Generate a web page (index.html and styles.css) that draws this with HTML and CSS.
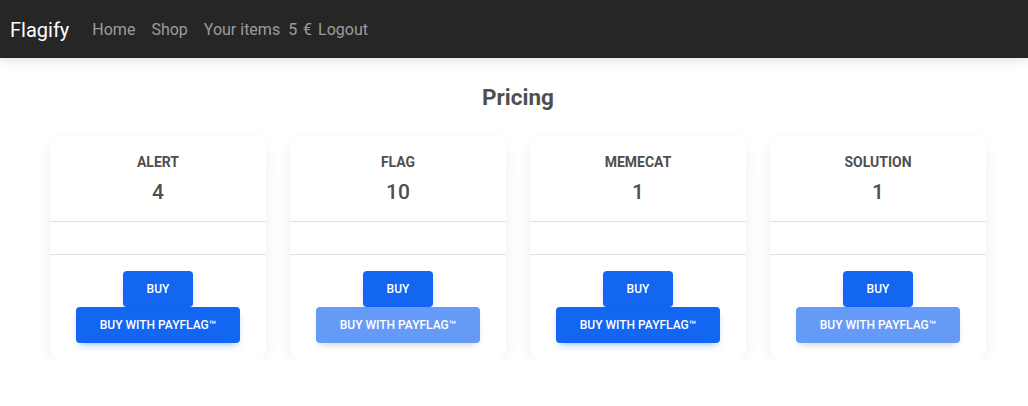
FILE: index.html
```html
<!DOCTYPE html>
<html>
<head>
<meta charset="utf-8">
<link rel="stylesheet" href="styles.css">
</head>
<body>
<nav class="navbar">
  <a class="brand">Flagify</a>
  <div class="nav-links">
    <a class="nav-link">Home</a>
    <a class="nav-link">Shop</a>
    <a class="nav-link items">Your items</a>
    <span class="balance">5 €</span>
    <a class="nav-link logout">Logout</a>
  </div>
</nav>
<main class="main">
  <h4 class="title">Pricing</h4>
  <div class="grid">
    <div class="card">
      <div class="card-header"><div class="name">ALERT</div><div class="price">4</div></div>
      <div class="card-body"></div>
      <div class="card-footer">
        <button class="btn">BUY</button>
        <button class="btn">BUY WITH PAYFLAG™</button>
      </div>
    </div>
    <div class="card">
      <div class="card-header"><div class="name">FLAG</div><div class="price">10</div></div>
      <div class="card-body"></div>
      <div class="card-footer">
        <button class="btn">BUY</button>
        <button class="btn disabled">BUY WITH PAYFLAG™</button>
      </div>
    </div>
    <div class="card">
      <div class="card-header"><div class="name">MEMECAT</div><div class="price">1</div></div>
      <div class="card-body"></div>
      <div class="card-footer">
        <button class="btn">BUY</button>
        <button class="btn">BUY WITH PAYFLAG™</button>
      </div>
    </div>
    <div class="card">
      <div class="card-header"><div class="name">SOLUTION</div><div class="price">1</div></div>
      <div class="card-body"></div>
      <div class="card-footer">
        <button class="btn">BUY</button>
        <button class="btn disabled">BUY WITH PAYFLAG™</button>
      </div>
    </div>
  </div>
</main>
</body>
</html>
```
FILE: styles.css
```css
* { box-sizing: border-box; }
html, body { margin: 0; background: #fff; }
body {
  font-family: Roboto, "Liberation Sans", sans-serif;
  color: #4f4f4f;
  font-size: 16px;
}
.navbar {
  height: 58px;
  background: #262626;
  display: flex;
  align-items: center;
  padding: 2px 10px 0;
  box-shadow: 0 4px 12px 0 rgba(0,0,0,.07), 0 2px 4px rgba(0,0,0,.05);
  position: relative;
}
.brand {
  color: #fff;
  font-size: 20px;
  line-height: 30px;
  margin-right: 15px;
}
.nav-links { display: flex; align-items: center; }
.nav-link, .balance {
  color: rgba(255,255,255,.55);
  font-size: 16px;
  line-height: 24px;
}
.nav-link { padding: 0 8px; }
.nav-link.items { padding-right: 8px; }
.balance { word-spacing: 2px; }
.nav-link.logout { padding-left: 6px; }
.main { padding: 24px 42px 0 50px; }
.title {
  margin: 0;
  text-align: center;
  font-size: 22.5px;
  font-weight: 700;
  line-height: 30px;
  color: #4f4f4f;
}
.grid {
  margin-top: 24px;
  display: grid;
  grid-template-columns: repeat(4, 216px);
  gap: 24px;
}
.card {
  background: #fff;
  border-radius: 8px;
  box-shadow: 0 2px 15px -3px rgba(0,0,0,.07), 0 10px 20px -2px rgba(0,0,0,.04);
  text-align: center;
}
.card-header {
  padding: 16px 0 16px;
  border-bottom: 1px solid #e0e0e0;
}
.name {
  font-size: 14px;
  font-weight: 700;
  line-height: 21px;
}
.price {
  margin-top: 7px;
  font-size: 21px;
  font-weight: 500;
  line-height: 25px;
}
.card-body {
  height: 33px;
  border-bottom: 1px solid #e0e0e0;
}
.card-footer {
  padding: 16px 0;
  display: flex;
  flex-direction: column;
  align-items: center;
}
.btn {
  font-family: Roboto, "Liberation Sans", sans-serif;
  background: #1266f1;
  color: #fff;
  border: 0;
  border-radius: 4px;
  font-size: 12px;
  font-weight: 500;
  line-height: 18px;
  padding: 9px 24px;
  height: 36px;
  box-shadow: 0 4px 9px -4px rgba(18,102,241,.6);
  text-transform: uppercase;
}
.btn.disabled {
  background: #659bf6;
  box-shadow: 0 4px 9px -4px rgba(0,0,0,.25);
}
```
